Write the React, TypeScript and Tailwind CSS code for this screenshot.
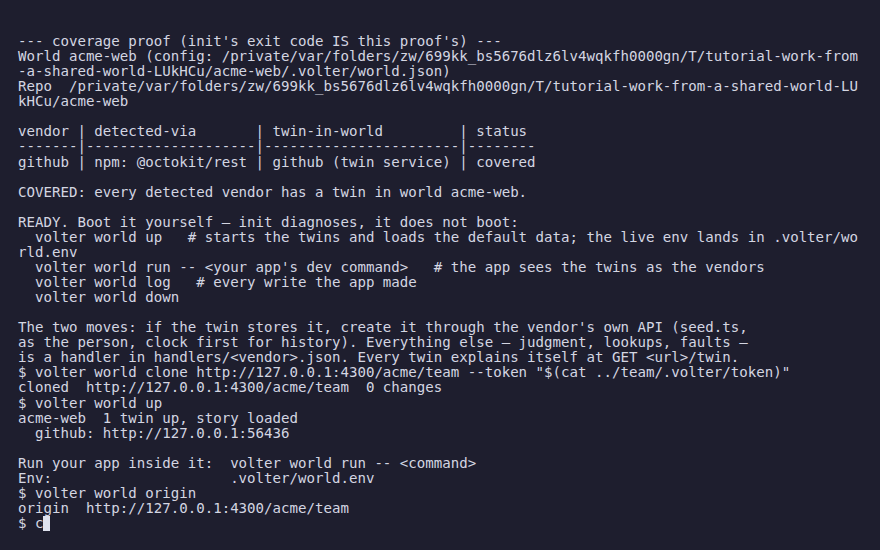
import React from "react";

const lines: string[] = [
  "--- coverage proof (init's exit code IS this proof's) ---",
  "World acme-web (config: /private/var/folders/zw/699kk_bs5676dlz6lv4wqkfh0000gn/T/tutorial-work-from",
  "-a-shared-world-LUkHCu/acme-web/.volter/world.json)",
  "Repo  /private/var/folders/zw/699kk_bs5676dlz6lv4wqkfh0000gn/T/tutorial-work-from-a-shared-world-LU",
  "kHCu/acme-web",
  "",
  "vendor | detected-via" + " ".repeat(7) + "| twin-in-world" + " ".repeat(9) + "| status",
  "-------|" + "-".repeat(20) + "|" + "-".repeat(23) + "|" + "-".repeat(8),
  "github | npm: @octokit/rest | github (twin service) | covered",
  "",
  "COVERED: every detected vendor has a twin in world acme-web.",
  "",
  "READY. Boot it yourself — init diagnoses, it does not boot:",
  "  volter world up   # starts the twins and loads the default data; the live env lands in .volter/wo",
  "rld.env",
  "  volter world run -- <your app's dev command>   # the app sees the twins as the vendors",
  "  volter world log   # every write the app made",
  "  volter world down",
  "",
  "The two moves: if the twin stores it, create it through the vendor's own API (seed.ts,",
  "as the person, clock first for history). Everything else — judgment, lookups, faults —",
  "is a handler in handlers/<vendor>.json. Every twin explains itself at GET <url>/twin.",
  "$ volter world clone http://127.0.0.1:4300/acme/team --token \"$(cat ../team/.volter/token)\"",
  "cloned  http://127.0.0.1:4300/acme/team  0 changes",
  "$ volter world up",
  "acme-web  1 twin up, story loaded",
  "  github: http://127.0.0.1:56436",
  "",
  "Run your app inside it:  volter world run -- <command>",
  "Env:                     .volter/world.env",
  "$ volter world origin",
  "origin  http://127.0.0.1:4300/acme/team",
];

export default function App() {
  return (
    <div className="w-[880px] h-[550px] bg-[#1e1e2e] overflow-hidden pt-[34px] pl-[18px]">
      <div
        className="text-[14.1px] leading-[15.07px] text-[#d4d6e2] whitespace-pre"
        style={{ fontFamily: '"DejaVu Sans Mono", "Liberation Mono", monospace' }}
      >
        {lines.map((l, i) => (
          <div key={i} className="h-[15.07px]">
            {l}
          </div>
        ))}
        <div className="h-[15.07px] flex items-center">
          <span>$ c</span>
          <span className="inline-block w-[7px] h-[15px] bg-[#dfe2ee]" />
        </div>
      </div>
    </div>
  );
}
